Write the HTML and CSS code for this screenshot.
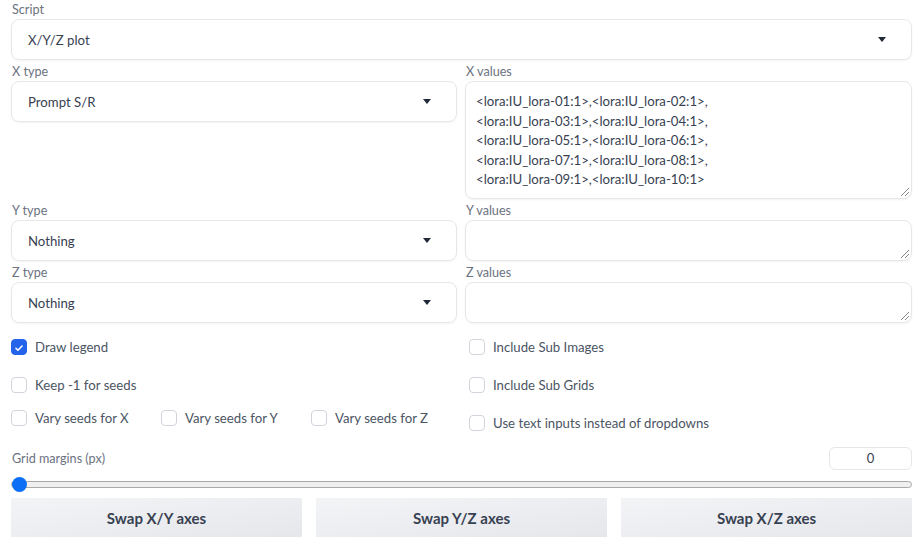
FILE: index.html
```html
<!DOCTYPE html>
<html>
<head>
<meta charset="utf-8">
<link rel="stylesheet" href="styles.css">
</head>
<body>
<div class="page">
  <div class="block">
    <div class="label">Script</div>
    <div class="select"><span>X/Y/Z plot</span><span class="arrow"></span></div>
  </div>

  <div class="grid">
    <div class="block">
      <div class="label">X type</div>
      <div class="select"><span>Prompt S/R</span><span class="arrow"></span></div>
    </div>
    <div class="block">
      <div class="label">X values</div>
      <div class="textarea tall">&lt;lora:IU_lora-01:1&gt;,&lt;lora:IU_lora-02:1&gt;,<br>&lt;lora:IU_lora-03:1&gt;,&lt;lora:IU_lora-04:1&gt;,<br>&lt;lora:IU_lora-05:1&gt;,&lt;lora:IU_lora-06:1&gt;,<br>&lt;lora:IU_lora-07:1&gt;,&lt;lora:IU_lora-08:1&gt;,<br>&lt;lora:IU_lora-09:1&gt;,&lt;lora:IU_lora-10:1&gt;<span class="grip"></span></div>
    </div>
    <div class="block">
      <div class="label">Y type</div>
      <div class="select"><span>Nothing</span><span class="arrow"></span></div>
    </div>
    <div class="block">
      <div class="label">Y values</div>
      <div class="textarea"><span class="grip"></span></div>
    </div>
    <div class="block">
      <div class="label">Z type</div>
      <div class="select"><span>Nothing</span><span class="arrow"></span></div>
    </div>
    <div class="block">
      <div class="label">Z values</div>
      <div class="textarea"><span class="grip"></span></div>
    </div>
  </div>

  <div class="checks">
    <div class="col">
      <label class="check c1"><span class="box on"><svg viewBox="0 0 16 16" width="16" height="16"><path d="M4.5 8.3l2.3 2.3 4.7-4.9" fill="none" stroke="#fff" stroke-width="1.8" stroke-linecap="round" stroke-linejoin="round"/></svg></span>Draw legend</label>
      <label class="check c2"><span class="box"></span>Keep -1 for seeds</label>
      <div class="row3">
        <label class="check"><span class="box"></span>Vary seeds for X</label>
        <label class="check"><span class="box"></span>Vary seeds for Y</label>
        <label class="check"><span class="box"></span>Vary seeds for Z</label>
      </div>
    </div>
    <div class="col right">
      <label class="check c1"><span class="box"></span>Include Sub Images</label>
      <label class="check c2"><span class="box"></span>Include Sub Grids</label>
      <label class="check c3"><span class="box"></span>Use text inputs instead of dropdowns</label>
    </div>
  </div>

  <div class="slider-head">
    <div class="label">Grid margins (px)</div>
    <div class="num">0</div>
  </div>
  <div class="slider"><span class="thumb"></span></div>

  <div class="buttons">
    <div class="btn">Swap X/Y axes</div>
    <div class="btn">Swap Y/Z axes</div>
    <div class="btn">Swap X/Z axes</div>
  </div>
</div>
</body>
</html>
```

FILE: styles.css
```css
* { box-sizing: border-box; }
html, body { margin: 0; padding: 0; background: #fff; }
body {
  font-family: "Lato", "Open Sans", sans-serif;
  color: #374151;
  font-size: 13.2px;
}
.page {
  width: 920px;
  padding: 0 8px 0 11px;
}
.block { margin-bottom: 2px; }
.label {
  font-size: 12.6px;
  line-height: 19px;
  height: 19px;
  color: #6b7280;
  padding-left: 1px;
}
.select {
  height: 41px;
  border: 1px solid #e5e7eb;
  border-radius: 8px;
  box-shadow: 0 1px 2px rgba(0,0,0,0.05);
  display: flex;
  align-items: center;
  justify-content: space-between;
  padding: 0 25px 0 16px;
  color: #374151;
}
.arrow {
  width: 0; height: 0;
  border-left: 4px solid transparent;
  border-right: 4px solid transparent;
  border-top: 5px solid #1f2937;
}
.grid {
  display: grid;
  grid-template-columns: 446px 447px;
  column-gap: 8px;
  align-items: start;
}
.textarea {
  position: relative;
  height: 41px;
  border: 1px solid #e5e7eb;
  border-radius: 8px;
  box-shadow: 0 1px 2px rgba(0,0,0,0.05);
  padding: 10px 10px;
  line-height: 19.5px;
  font-size: 13.2px;
}
.textarea.tall { height: 118px; }
.grip {
  position: absolute;
  right: 2px; bottom: 2px;
  width: 8px; height: 8px;
  background: linear-gradient(135deg, transparent 45%, #888 45%, #888 55%, transparent 55%, transparent 70%, #888 70%, #888 80%, transparent 80%);
}
.checks {
  display: grid;
  grid-template-columns: 454px 447px;
  margin-top: 12px;
}
.check {
  display: flex;
  align-items: center;
  gap: 8px;
  height: 20px;
  font-size: 13.2px;
  color: #4b5563;
}
.box {
  width: 16px; height: 16px;
  border: 1px solid #d1d5db;
  border-radius: 4px;
  background: #fff;
  display: inline-flex;
  flex: none;
}
.box.on {
  background: #2563eb;
  border-color: #2563eb;
}
.col .c2 { margin-top: 18px; }
.row3 { display: flex; margin-top: 13px; }
.row3 .check { width: 150px; }
.right { padding-left: 4px; }
.right .c3 { margin-top: 18px; }
.slider-head {
  display: flex;
  justify-content: space-between;
  align-items: center;
  margin-top: 14px;
}
.num {
  width: 83px; height: 23px;
  border: 1px solid #e5e7eb;
  border-radius: 6px;
  text-align: center;
  font-size: 13px;
  line-height: 21px;
  color: #374151;
}
.slider {
  position: relative;
  height: 7px;
  margin-top: 11px;
  border: 1px solid #a8a8a8;
  border-radius: 4px;
  background: #efefef;
}
.thumb {
  position: absolute;
  left: 0; top: -5px;
  width: 15px; height: 15px;
  border-radius: 50%;
  background: #0b6ff5;
}
.buttons {
  display: grid;
  grid-template-columns: 1fr 1fr 1fr;
  column-gap: 14px;
  margin-top: 10px;
}
.btn {
  height: 39px;
  background: linear-gradient(to bottom right, #f3f4f6, #e5e7eb);
  display: flex;
  align-items: center;
  justify-content: center;
  font-weight: 700;
  font-size: 15px;
  color: #374151;
}
```
